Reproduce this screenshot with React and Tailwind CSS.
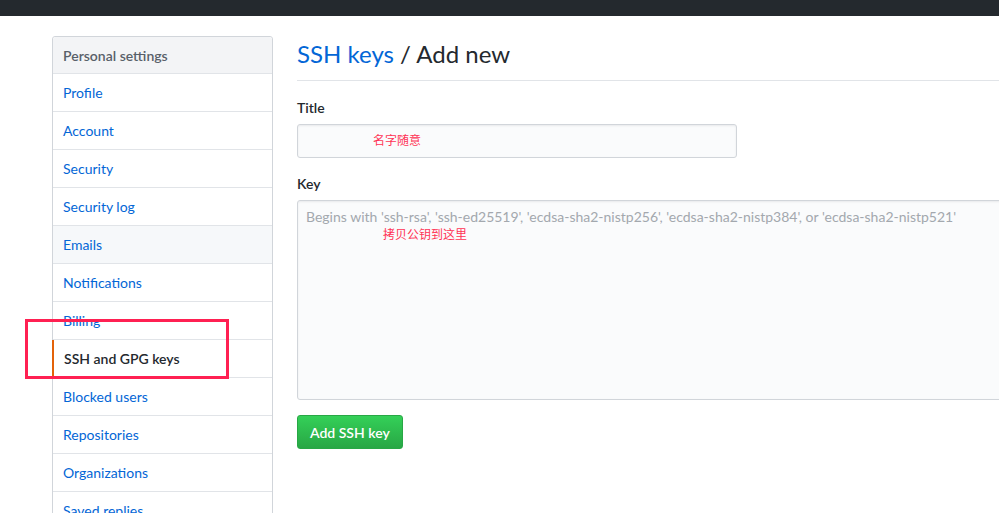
import React from "react";

const items = [
  "Profile",
  "Account",
  "Security",
  "Security log",
  "Emails",
  "Notifications",
  "Billing",
  "SSH and GPG keys",
  "Blocked users",
  "Repositories",
  "Organizations",
  "Saved replies",
];

const App = () => {
  return (
    <div
      className="w-[999px] h-[513px] overflow-hidden bg-white relative"
      style={{ fontFamily: "Lato, 'Noto Sans', 'Noto Sans CJK SC', sans-serif" }}
    >
      {/* top bar */}
      <div className="h-4 bg-[#24292e]" />

      <div className="flex pl-[52px] pt-5 gap-[24px]">
        {/* sidebar */}
        <nav className="w-[221px] shrink-0 border border-[#d1d5da] rounded-t-[3px] text-[14px]">
          <div className="h-[37px] flex items-center px-[10px] bg-[#f3f4f6] border-b border-[#e1e4e8] text-[#586069] font-semibold rounded-t-[3px]">
            Personal settings
          </div>
          {items.map((item) => {
            const selected = item === "SSH and GPG keys";
            const hovered = item === "Emails";
            return (
              <div
                key={item}
                className={
                  selected
                    ? "h-[38px] flex items-center px-[10px] border-b border-[#e1e4e8] border-l-2 border-l-[#e36209] -ml-px text-[#24292e] font-semibold"
                    : hovered
                    ? "h-[38px] flex items-center px-[10px] border-b border-[#e1e4e8] bg-[#f6f8fa] text-[#0366d6]"
                    : "h-[38px] flex items-center px-[10px] border-b border-[#e1e4e8] text-[#0366d6]"
                }
              >
                {item}
              </div>
            );
          })}
        </nav>

        {/* main */}
        <div className="w-[760px] shrink-0">
          <div className="border-b border-[#e1e4e8] pb-[11px] mt-[3px]">
            <h2 className="text-[24px] font-normal text-[#24292e] leading-[30px]">
              <span className="text-[#0366d6]">SSH keys</span> / Add new
            </h2>
          </div>

          <div className="mt-[17px]">
            <label className="block text-[14px] font-semibold text-[#24292e] leading-[20px]">
              Title
            </label>
            <div className="mt-[6px] w-[440px] h-[34px] bg-[#fafbfc] border border-[#d1d5da] rounded-[3px] shadow-[inset_0_1px_2px_rgba(27,31,35,0.075)] flex items-center pl-[75px]">
              <span className="text-[12px] text-[#ff3355]">名字随意</span>
            </div>
          </div>

          <div className="mt-[16px]">
            <label className="block text-[14px] font-semibold text-[#24292e] leading-[20px]">
              Key
            </label>
            <div className="mt-[6px] w-[740px] h-[200px] bg-[#fafbfc] border border-[#d1d5da] rounded-[3px] shadow-[inset_0_1px_2px_rgba(27,31,35,0.075)] px-[8px] pt-[6px]">
              <div className="text-[14px] text-[#a3a8ae] leading-[20px] whitespace-nowrap">
                Begins with 'ssh-rsa', 'ssh-ed25519', 'ecdsa-sha2-nistp256', 'ecdsa-sha2-nistp384', or 'ecdsa-sha2-nistp521'
              </div>
              <div className="pl-[77px] text-[12px] text-[#ff3355] leading-[16px]">
                拷贝公钥到这里
              </div>
            </div>
          </div>

          <button className="mt-[15px] h-[34px] px-[12px] rounded-[3px] border border-[#28a745] bg-gradient-to-b from-[#34d058] to-[#28a745] text-white text-[14px] font-semibold">
            Add SSH key
          </button>
        </div>
      </div>

      {/* red highlight */}
      <div className="absolute left-[25px] top-[319px] w-[204px] h-[60px] border-[3px] border-[#ff2052]" />
    </div>
  );
};

export default App;
